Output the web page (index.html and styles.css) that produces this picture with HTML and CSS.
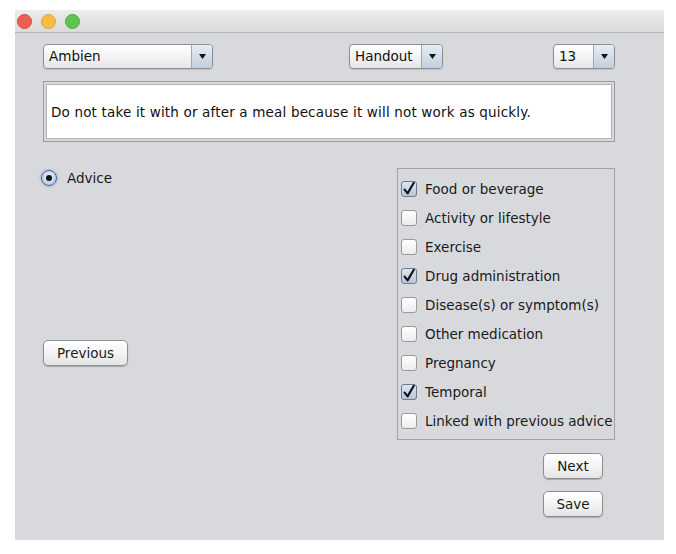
FILE: index.html
```html
<!DOCTYPE html>
<html>
<head>
<meta charset="utf-8">
<link rel="stylesheet" href="styles.css">
</head>
<body>
<div class="window">
  <div class="titlebar">
    <span class="light light-red"></span>
    <span class="light light-yellow"></span>
    <span class="light light-green"></span>
  </div>
  <div class="content">
    <div class="toprow">
      <div class="combo combo-drug">
        <span class="combo-label">Ambien</span>
        <span class="combo-arrow"><svg width="7" height="5" viewBox="0 0 7 5"><polygon points="0,0 7,0 3.5,5" fill="#111"/></svg></span>
      </div>
      <div class="combo combo-source">
        <span class="combo-label">Handout</span>
        <span class="combo-arrow"><svg width="7" height="5" viewBox="0 0 7 5"><polygon points="0,0 7,0 3.5,5" fill="#111"/></svg></span>
      </div>
      <div class="combo combo-num">
        <span class="combo-label">13</span>
        <span class="combo-arrow"><svg width="7" height="5" viewBox="0 0 7 5"><polygon points="0,0 7,0 3.5,5" fill="#111"/></svg></span>
      </div>
    </div>

    <div class="textbox">
      <div class="textbox-inner">Do not take it with or after a meal because it will not work as quickly.</div>
    </div>

    <div class="lower">
      <div class="left-col">
        <div class="radio">
          <span class="radio-circle"><span class="radio-dot"></span></span>
          <span class="radio-label">Advice</span>
        </div>
        <button class="btn btn-prev">Previous</button>
      </div>
      <div class="right-col">
        <div class="checklist">
          <div class="check"><span class="box box-checked"><svg width="16" height="16" viewBox="0 0 16 16"><path d="M3.6 8.6 L6.6 12.4 L12.8 1.8" fill="none" stroke="#111" stroke-width="2.1" stroke-linecap="round" stroke-linejoin="round"/></svg></span><span class="check-label">Food or beverage</span></div>
          <div class="check"><span class="box"></span><span class="check-label">Activity or lifestyle</span></div>
          <div class="check"><span class="box"></span><span class="check-label">Exercise</span></div>
          <div class="check"><span class="box box-checked"><svg width="16" height="16" viewBox="0 0 16 16"><path d="M3.6 8.6 L6.6 12.4 L12.8 1.8" fill="none" stroke="#111" stroke-width="2.1" stroke-linecap="round" stroke-linejoin="round"/></svg></span><span class="check-label">Drug administration</span></div>
          <div class="check"><span class="box"></span><span class="check-label">Disease(s) or symptom(s)</span></div>
          <div class="check"><span class="box"></span><span class="check-label">Other medication</span></div>
          <div class="check"><span class="box"></span><span class="check-label">Pregnancy</span></div>
          <div class="check"><span class="box box-checked"><svg width="16" height="16" viewBox="0 0 16 16"><path d="M3.6 8.6 L6.6 12.4 L12.8 1.8" fill="none" stroke="#111" stroke-width="2.1" stroke-linecap="round" stroke-linejoin="round"/></svg></span><span class="check-label">Temporal</span></div>
          <div class="check"><span class="box"></span><span class="check-label">Linked with previous advice</span></div>
        </div>
        <div class="actions">
          <button class="btn btn-action">Next</button>
          <button class="btn btn-action">Save</button>
        </div>
      </div>
    </div>
  </div>
</div>
</body>
</html>
```

FILE: styles.css
```css
html, body {
  margin: 0;
  padding: 0;
  background: #ffffff;
}

body {
  font-family: "DejaVu Sans", "Liberation Sans", sans-serif;
  font-size: 13.5px;
  color: #1a1a1a;
}

.window {
  margin: 10px 0 0 15px;
  width: 649px;
  height: 530px;
  background: #d8d9dd;
}

.titlebar {
  height: 22px;
  border-bottom: 1px solid #b6b6b6;
  background: linear-gradient(#ececec, #dadada);
  display: flex;
  align-items: center;
  gap: 9px;
  padding-left: 2px;
}

.light {
  width: 15px;
  height: 15px;
  border-radius: 50%;
  box-sizing: border-box;
}

.light-red { background: #ec5f55; border: 1px solid #d9493f; }
.light-yellow { background: #f6bd45; border: 1px solid #e0a534; }
.light-green { background: #5fc452; border: 1px solid #4aad3e; }

.content {
  padding: 11px 49px 0 28px;
}

.toprow {
  display: flex;
  height: 25px;
}

.combo {
  display: flex;
  box-sizing: border-box;
  height: 25px;
  border: 1px solid #8d8d8f;
  border-radius: 4px;
  background: linear-gradient(#ffffff, #f3f3f3 50%, #e6e6e6);
  box-shadow: 0 1px 1px rgba(0, 0, 0, 0.12);
  overflow: hidden;
}

.combo-drug { width: 170px; }
.combo-source { width: 94px; margin-left: 136px; }
.combo-num { width: 62px; margin-left: 110px; }

.combo-label {
  flex: 1;
  padding-left: 5px;
  line-height: 23px;
  color: #111;
}

.combo-arrow {
  width: 20px;
  border-left: 1px solid #a2a6ad;
  background: linear-gradient(#e6ecf4, #c2cedf);
  display: flex;
  align-items: center;
  justify-content: center;
}

.textbox {
  margin-top: 12px;
  height: 61px;
  box-sizing: border-box;
  border: 1px solid #9c9c9e;
  padding: 2px;
}

.textbox-inner {
  height: 100%;
  box-sizing: border-box;
  border: 1px solid #b3b3b5;
  background: #ffffff;
  padding-left: 4px;
  display: flex;
  align-items: center;
  color: #111;
  white-space: nowrap;
  letter-spacing: 0.17px;
}

.lower {
  margin-top: 26px;
  display: grid;
  grid-template-columns: 354px 218px;
}

.left-col {
  display: flex;
  flex-direction: column;
  align-items: flex-start;
}

.radio {
  display: flex;
  align-items: center;
  margin-left: -2px;
  margin-top: 1px;
  height: 18px;
}

.radio-circle {
  width: 16px;
  height: 16px;
  box-sizing: border-box;
  border-radius: 50%;
  border: 1px solid #4f6584;
  background: radial-gradient(circle at 50% 40%, #eef3fa, #a9bcd7);
  box-shadow: 0 0 2px 1px rgba(110, 150, 210, 0.45);
  display: flex;
  align-items: center;
  justify-content: center;
}

.radio-dot {
  width: 6px;
  height: 6px;
  border-radius: 50%;
  background: #111;
}

.radio-label {
  margin-left: 10px;
}

.btn {
  font-family: inherit;
  font-size: 13.5px;
  color: #1a1a1a;
  height: 26px;
  padding: 0;
  border: 1px solid #8e8e90;
  border-radius: 5px;
  background: linear-gradient(#ffffff, #f4f4f4 50%, #e4e4e4);
  box-shadow: 0 1px 1px rgba(0, 0, 0, 0.22);
}

.btn-prev {
  width: 85px;
  margin-top: 153px;
}

.checklist {
  border: 1px solid #a3a3a5;
  padding: 5px 0 4px 3px;
  height: 272px;
  box-sizing: border-box;
}

.check {
  display: flex;
  align-items: center;
  height: 29px;
  white-space: nowrap;
}

.box {
  width: 16px;
  height: 16px;
  box-sizing: border-box;
  border: 1px solid #9a9a9c;
  border-radius: 3px;
  background: linear-gradient(#ffffff, #ececec);
  position: relative;
  flex: none;
}

.box svg {
  position: absolute;
  left: -1px;
  top: -1px;
}

.box-checked {
  border-color: #6e7a8e;
  background: linear-gradient(#dde6f2, #b7c6dc);
}

.check-label {
  margin-left: 8px;
}

.actions {
  display: flex;
  flex-direction: column;
  align-items: flex-end;
  gap: 12px;
  margin-top: 13px;
  padding-right: 12px;
}

.btn-action {
  width: 60px;
}
```
